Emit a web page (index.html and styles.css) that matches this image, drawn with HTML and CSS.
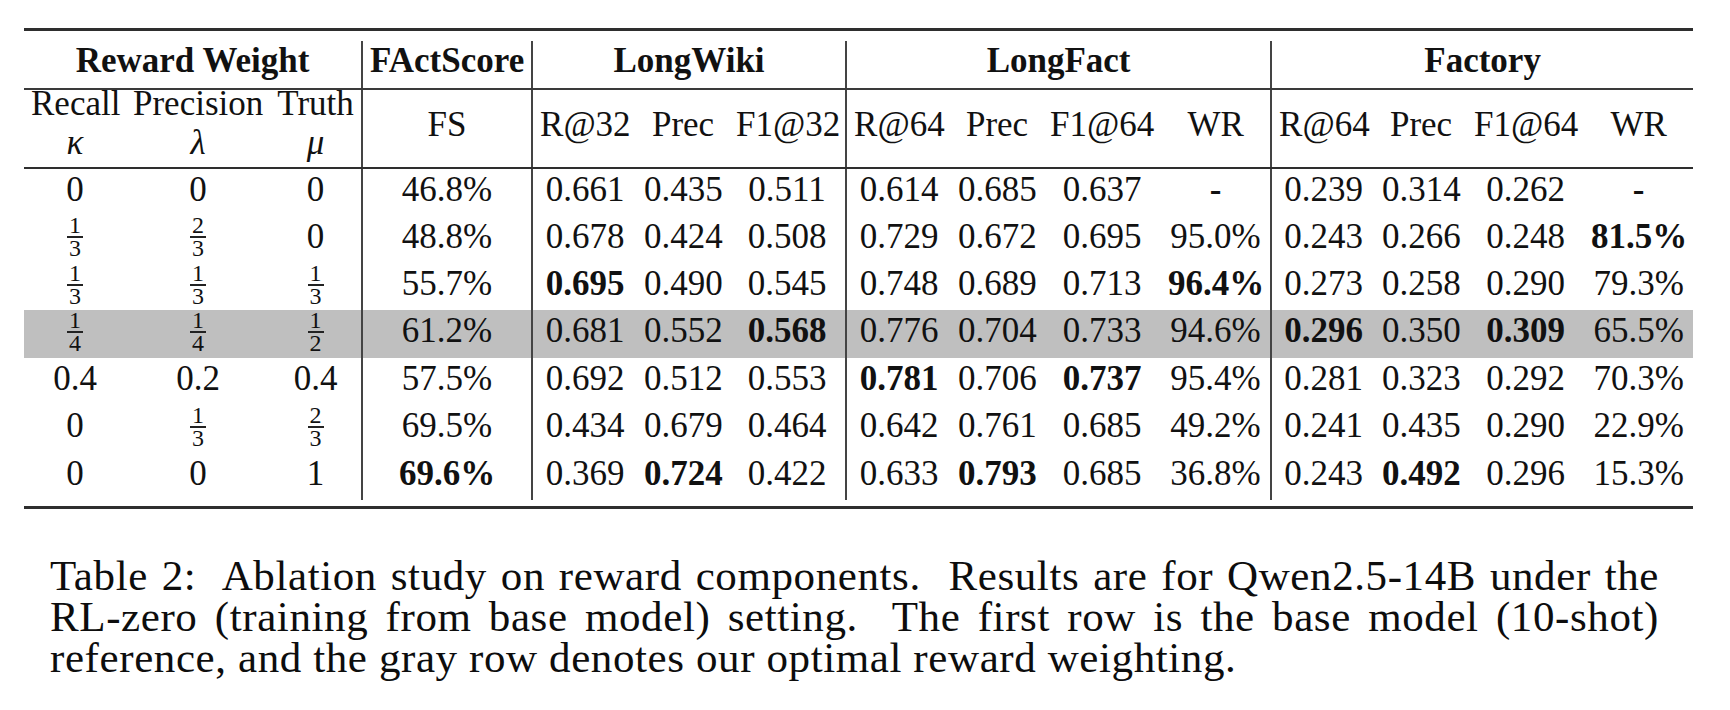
FILE: index.html
```html
<!DOCTYPE html>
<html lang="en">
<head>
<meta charset="utf-8">
<title>Table 2: Ablation study on reward components</title>
<link rel="stylesheet" href="styles.css">
</head>
<body>
<div class="figure">
  <div class="table-wrap">
    <table class="results">
      <colgroup>
        <col class="w-k"><col class="w-l"><col class="w-m">
        <col class="w-fs">
        <col class="w-r"><col class="w-p"><col class="w-f1">
        <col class="w-r"><col class="w-p"><col class="w-f1b"><col class="w-wr">
        <col class="w-r2"><col class="w-p"><col class="w-f1"><col class="w-wr2">
      </colgroup>
      <thead>
        <tr class="group-row">
          <th colspan="3" class="vr">Reward Weight</th>
          <th class="vr">FActScore</th>
          <th colspan="3" class="vr">LongWiki</th>
          <th colspan="4" class="vr">LongFact</th>
          <th colspan="4">Factory</th>
        </tr>
        <tr class="sub-a">
          <th class="lbl">Recall</th>
          <th class="lbl">Precision</th>
          <th class="lbl vr">Truth</th>
          <th rowspan="2" class="span2 vr">FS</th>
          <th rowspan="2" class="span2">R@32</th>
          <th rowspan="2" class="span2">Prec</th>
          <th rowspan="2" class="span2 vr">F1@32</th>
          <th rowspan="2" class="span2">R@64</th>
          <th rowspan="2" class="span2">Prec</th>
          <th rowspan="2" class="span2">F1@64</th>
          <th rowspan="2" class="span2 vr">WR</th>
          <th rowspan="2" class="span2">R@64</th>
          <th rowspan="2" class="span2">Prec</th>
          <th rowspan="2" class="span2">F1@64</th>
          <th rowspan="2" class="span2">WR</th>
        </tr>
        <tr class="sub-b">
          <th><i>κ</i></th>
          <th><i>λ</i></th>
          <th class="vr"><i>μ</i></th>
        </tr>
      </thead>
      <tbody>
        <tr>
          <td>0</td><td>0</td><td class="vr">0</td>
          <td class="vr">46.8%</td>
          <td>0.661</td><td>0.435</td><td class="vr">0.511</td>
          <td>0.614</td><td>0.685</td><td>0.637</td><td class="vr"><b>-</b></td>
          <td>0.239</td><td>0.314</td><td>0.262</td><td><b>-</b></td>
        </tr>
        <tr>
          <td><span class="frac"><span class="num">1</span><span class="den">3</span></span></td>
          <td><span class="frac"><span class="num">2</span><span class="den">3</span></span></td>
          <td class="vr">0</td>
          <td class="vr">48.8%</td>
          <td>0.678</td><td>0.424</td><td class="vr">0.508</td>
          <td>0.729</td><td>0.672</td><td>0.695</td><td class="vr">95.0%</td>
          <td>0.243</td><td>0.266</td><td>0.248</td><td><b>81.5%</b></td>
        </tr>
        <tr>
          <td><span class="frac"><span class="num">1</span><span class="den">3</span></span></td>
          <td><span class="frac"><span class="num">1</span><span class="den">3</span></span></td>
          <td class="vr"><span class="frac"><span class="num">1</span><span class="den">3</span></span></td>
          <td class="vr">55.7%</td>
          <td><b>0.695</b></td><td>0.490</td><td class="vr">0.545</td>
          <td>0.748</td><td>0.689</td><td>0.713</td><td class="vr"><b>96.4%</b></td>
          <td>0.273</td><td>0.258</td><td>0.290</td><td>79.3%</td>
        </tr>
        <tr class="best">
          <td><span class="frac"><span class="num">1</span><span class="den">4</span></span></td>
          <td><span class="frac"><span class="num">1</span><span class="den">4</span></span></td>
          <td class="vr"><span class="frac"><span class="num">1</span><span class="den">2</span></span></td>
          <td class="vr">61.2%</td>
          <td>0.681</td><td>0.552</td><td class="vr"><b>0.568</b></td>
          <td>0.776</td><td>0.704</td><td>0.733</td><td class="vr">94.6%</td>
          <td><b>0.296</b></td><td>0.350</td><td><b>0.309</b></td><td>65.5%</td>
        </tr>
        <tr>
          <td>0.4</td><td>0.2</td><td class="vr">0.4</td>
          <td class="vr">57.5%</td>
          <td>0.692</td><td>0.512</td><td class="vr">0.553</td>
          <td><b>0.781</b></td><td>0.706</td><td><b>0.737</b></td><td class="vr">95.4%</td>
          <td>0.281</td><td>0.323</td><td>0.292</td><td>70.3%</td>
        </tr>
        <tr>
          <td>0</td>
          <td><span class="frac"><span class="num">1</span><span class="den">3</span></span></td>
          <td class="vr"><span class="frac"><span class="num">2</span><span class="den">3</span></span></td>
          <td class="vr">69.5%</td>
          <td>0.434</td><td>0.679</td><td class="vr">0.464</td>
          <td>0.642</td><td>0.761</td><td>0.685</td><td class="vr">49.2%</td>
          <td>0.241</td><td>0.435</td><td>0.290</td><td>22.9%</td>
        </tr>
        <tr>
          <td>0</td><td>0</td><td class="vr">1</td>
          <td class="vr"><b>69.6%</b></td>
          <td>0.369</td><td><b>0.724</b></td><td class="vr">0.422</td>
          <td>0.633</td><td><b>0.793</b></td><td>0.685</td><td class="vr">36.8%</td>
          <td>0.243</td><td><b>0.492</b></td><td>0.296</td><td>15.3%</td>
        </tr>
      </tbody>
    </table>
  </div>
  <p class="caption">Table 2:&nbsp; Ablation study on reward components.&nbsp; Results are for Qwen2.5-14B under the RL-zero (training from base model) setting.&nbsp; The first row is the base model (10-shot) reference, and the gray row denotes our optimal reward weighting.</p>
</div>
</body>
</html>
```

FILE: styles.css
```css
html, body {
  margin: 0;
  padding: 0;
  background: #ffffff;
}

body {
  color: #111111;
  font-family: "Liberation Serif", "Times New Roman", serif;
}

.figure {
  width: 1730px;
  height: 710px;
  overflow: hidden;
}

.table-wrap {
  margin: 28px 0 0 24px;
  width: 1669px;
  border-top: 3px solid #2e2e2e;
  border-bottom: 3px solid #2e2e2e;
  padding: 10px 0 6px;
}

.results {
  border-collapse: collapse;
  table-layout: fixed;
  width: 1669px;
  font-size: 35px;
}

.w-k { width: 102px; }
.w-l { width: 144px; }
.w-m { width: 92px; }
.w-fs { width: 170px; }
.w-r { width: 105px; }
.w-p { width: 92px; }
.w-f1 { width: 117px; }
.w-f1b { width: 118px; }
.w-wr { width: 110px; }
.w-r2 { width: 104px; }
.w-wr2 { width: 109px; }

.results th,
.results td {
  padding: 0 7px 5px;
  text-align: center;
  vertical-align: middle;
  white-space: nowrap;
  line-height: normal;
  font-weight: normal;
}

.results .vr {
  border-right: 2px solid #444444;
}

.results b {
  font-weight: bold;
}

/* header row 1: group titles */
.group-row {
  height: 48px;
}

.group-row th {
  font-weight: bold;
  padding-bottom: 7px;
  border-bottom: 2px solid #3a3a3a;
}

/* header row 2a: Recall / Precision / Truth */
.sub-a {
  height: 27px;
}

.sub-a th.lbl {
  padding: 2px 7px 0;
  line-height: 24px;
  vertical-align: top;
}

.sub-a th.span2 {
  padding-bottom: 7px;
  border-bottom: 2px solid #2e2e2e;
}

/* header row 2b: greek symbols */
.sub-b {
  height: 52px;
}

.sub-b th {
  vertical-align: bottom;
  padding-bottom: 4px;
  border-bottom: 2px solid #2e2e2e;
}

.sub-b i {
  font-style: italic;
}

/* body rows */
.results tbody tr {
  height: 47.43px;
}

.results tr.best td {
  background: #bfbfbf;
}

/* stacked text-style fractions */
.frac {
  display: inline-flex;
  flex-direction: column;
  align-items: center;
  font-size: 24px;
  line-height: 18px;
  vertical-align: 15px;
}

.frac .num {
  padding: 0 2px 2px;
  border-bottom: 2px solid #222222;
}

.frac .den {
  padding: 1px 2px 0;
}

.caption {
  margin: 46px 0 0 50px;
  width: 1609px;
  font-size: 43px;
  line-height: 41px;
  letter-spacing: 0.6px;
  text-align: justify;
  color: #0d0d0d;
}
```
